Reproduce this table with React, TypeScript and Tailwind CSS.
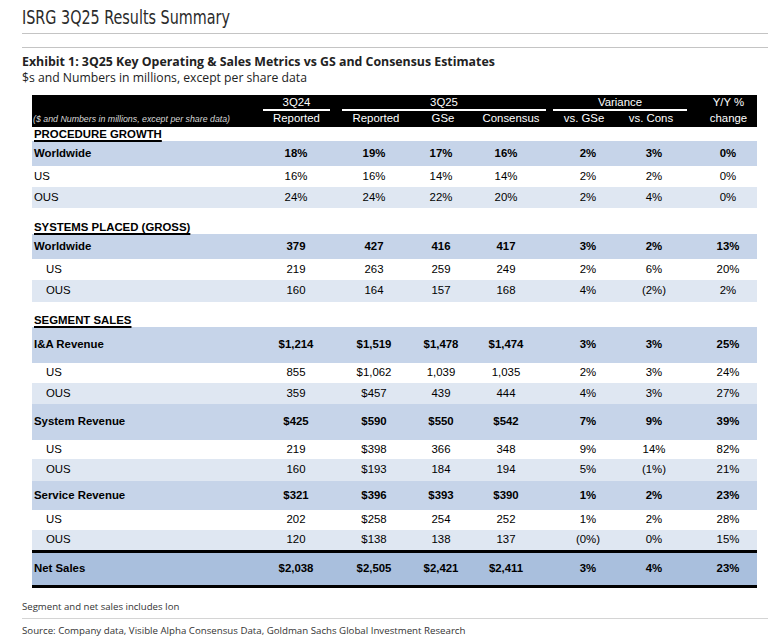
import React from "react";

type Kind = "bold" | "plain" | "alt" | "net";

interface IRow {
  label: string;
  values: string[];
  kind: Kind;
  indent?: boolean;
  h: string;
}

const arial = { fontFamily: '"Liberation Sans", Arial, sans-serif' };
const humanist = { fontFamily: '"Open Sans", "Noto Sans", sans-serif' };

// ===== data =====
const sections: { title: string; h: string; rows: IRow[] }[] = [
  {
    title: "PROCEDURE GROWTH",
    h: "h-[14px]",
    rows: [
      { label: "Worldwide", kind: "bold", h: "h-[25px]", values: ["18%", "19%", "17%", "16%", "2%", "3%", "0%"] },
      { label: "US", kind: "plain", h: "h-[21px]", values: ["16%", "16%", "14%", "14%", "2%", "2%", "0%"] },
      { label: "OUS", kind: "alt", h: "h-[21px]", values: ["24%", "24%", "22%", "20%", "2%", "4%", "0%"] },
    ],
  },
  {
    title: "SYSTEMS PLACED (GROSS)",
    h: "h-[26px]",
    rows: [
      { label: "Worldwide", kind: "bold", h: "h-[25px]", values: ["379", "427", "416", "417", "3%", "2%", "13%"] },
      { label: "US", kind: "plain", indent: true, h: "h-[21px]", values: ["219", "263", "259", "249", "2%", "6%", "20%"] },
      { label: "OUS", kind: "alt", indent: true, h: "h-[22px]", values: ["160", "164", "157", "168", "4%", "(2%)", "2%"] },
    ],
  },
  {
    title: "SEGMENT SALES",
    h: "h-[25px]",
    rows: [
      { label: "I&A Revenue", kind: "bold", h: "h-[36px]", values: ["$1,214", "$1,519", "$1,478", "$1,474", "3%", "3%", "25%"] },
      { label: "US", kind: "plain", indent: true, h: "h-[20px]", values: ["855", "$1,062", "1,039", "1,035", "2%", "3%", "24%"] },
      { label: "OUS", kind: "alt", indent: true, h: "h-[21px]", values: ["359", "$457", "439", "444", "4%", "3%", "27%"] },
      { label: "System Revenue", kind: "bold", h: "h-[36px]", values: ["$425", "$590", "$550", "$542", "7%", "9%", "39%"] },
      { label: "US", kind: "plain", indent: true, h: "h-[19px]", values: ["219", "$398", "366", "348", "9%", "14%", "82%"] },
      { label: "OUS", kind: "alt", indent: true, h: "h-[22px]", values: ["160", "$193", "184", "194", "5%", "(1%)", "21%"] },
      { label: "Service Revenue", kind: "bold", h: "h-[29px]", values: ["$321", "$396", "$393", "$390", "1%", "2%", "23%"] },
      { label: "US", kind: "plain", indent: true, h: "h-[20px]", values: ["202", "$258", "254", "252", "1%", "2%", "28%"] },
      { label: "OUS", kind: "alt", indent: true, h: "h-[20px]", values: ["120", "$138", "138", "137", "(0%)", "0%", "15%"] },
    ],
  },
];

const netSales = ["$2,038", "$2,505", "$2,421", "$2,411", "3%", "4%", "23%"];

// value cell widths (centers line up with the reference columns)
const cellW = ["w-[72px]", "w-[84px]", "w-[50px]", "w-[80px]", "w-[84px]", "w-[48px]", "w-[56px] ml-[22px]"];

const bg: Record<Kind, string> = {
  bold: "bg-[#c6d4e9] font-bold",
  plain: "bg-white",
  alt: "bg-[#dfe7f2]",
  net: "bg-[#a9bfdd] font-bold",
};

const DataRow = ({ row }: { row: IRow }) => (
  <div className={`flex items-center ${row.h} ${bg[row.kind]}`}>
    <div className={`w-[228px] ${row.indent ? "pl-[14px]" : "pl-[2px]"}`}>{row.label}</div>
    {row.values.map((v, i) => (
      <div key={i} className={`${cellW[i]} text-center`}>
        {v}
      </div>
    ))}
  </div>
);

const App = () => {
  return (
    <div className="w-[772px] h-[641px] bg-white overflow-hidden text-black">
      <div className="pl-[22px] pr-[4px]">
        {/* ================== title part ===================== */}
        <div
          className="pt-[5px] h-[33px] text-[19px] leading-[24px] text-[#2b2b2b]"
          style={{ fontFamily: '"Liberation Sans Narrow", "DejaVu Sans Condensed", "Roboto", sans-serif' }}
        >
          <div className="origin-left scale-x-[0.84] whitespace-nowrap">ISRG 3Q25 Results Summary</div>
        </div>
        <div className="h-px bg-[#c4c4c4]" />
        <div className="h-[13px]" />
        <div className="h-px bg-[#c4c4c4]" />

        <div style={humanist} className="mt-[6px] text-[#222]">
          <div className="text-[12.35px] leading-[16px] font-bold whitespace-nowrap">
            Exhibit 1: 3Q25 Key Operating &amp; Sales Metrics vs GS and Consensus Estimates
          </div>
          <div className="text-[12.2px] leading-[16px]">$s and Numbers in millions, except per share data</div>
        </div>

        {/* ================== table part ===================== */}
        <div style={arial} className="ml-[10px] mt-[9px] w-[725px] text-[11.4px]">
          <div className="bg-black text-white h-[32px] flex">
            <div className="w-[231px] flex items-end pb-[3px] pl-[1px]">
              <span className="italic text-[8.8px] leading-[10px] text-[#d8d8d8] whitespace-nowrap">
                ($ and Numbers in millions, except per share data)
              </span>
            </div>
            <div className="flex flex-col w-[67px]">
              <div className="h-[16px] leading-[15px] text-center border-b-2 border-white">3Q24</div>
              <div className="h-[16px] leading-[15px] text-center">Reported</div>
            </div>
            <div className="flex flex-col w-[204px] ml-[12px]">
              <div className="h-[16px] leading-[15px] text-center border-b-2 border-white">3Q25</div>
              <div className="flex h-[16px] leading-[15px]">
                <div className="w-[68px] text-center">Reported</div>
                <div className="w-[66px] text-center">GSe</div>
                <div className="w-[70px] text-center">Consensus</div>
              </div>
            </div>
            <div className="flex flex-col w-[134px] ml-[7px]">
              <div className="h-[16px] leading-[15px] text-center border-b-2 border-white">Variance</div>
              <div className="flex h-[16px] leading-[15px]">
                <div className="w-[62px] text-center">vs. GSe</div>
                <div className="w-[72px] text-center">vs. Cons</div>
              </div>
            </div>
            <div className="flex flex-col w-[57px] ml-[13px]">
              <div className="h-[16px] leading-[15px] text-center">Y/Y %</div>
              <div className="h-[16px] leading-[15px] text-center">change</div>
            </div>
          </div>

          {sections.map((s) => (
            <div key={s.title}>
              <div className={`${s.h} flex items-end`}>
                <span className="pl-[2px] font-bold underline underline-offset-[2px] decoration-[1.5px] leading-[14px]">
                  {s.title}
                </span>
              </div>
              {s.rows.map((r, i) => (
                <DataRow key={i} row={r} />
              ))}
            </div>
          ))}

          <div className="border-t-[3px] border-b-[3px] border-black">
            <DataRow row={{ label: "Net Sales", kind: "net", h: "h-[32px]", values: netSales }} />
          </div>
        </div>

        {/* ================== notes part ===================== */}
        <div style={humanist} className="text-[#333]">
          <div className="mt-[12px] text-[9.6px] leading-[14px]">Segment and net sales includes Ion</div>
          <div className="mt-[4px] h-px bg-[#d4d4d4]" />
          <div className="mt-[5px] text-[9.7px] leading-[14px] whitespace-nowrap">
            Source: Company data, Visible Alpha Consensus Data, Goldman Sachs Global Investment Research
          </div>
        </div>
      </div>
    </div>
  );
};

export default App;
